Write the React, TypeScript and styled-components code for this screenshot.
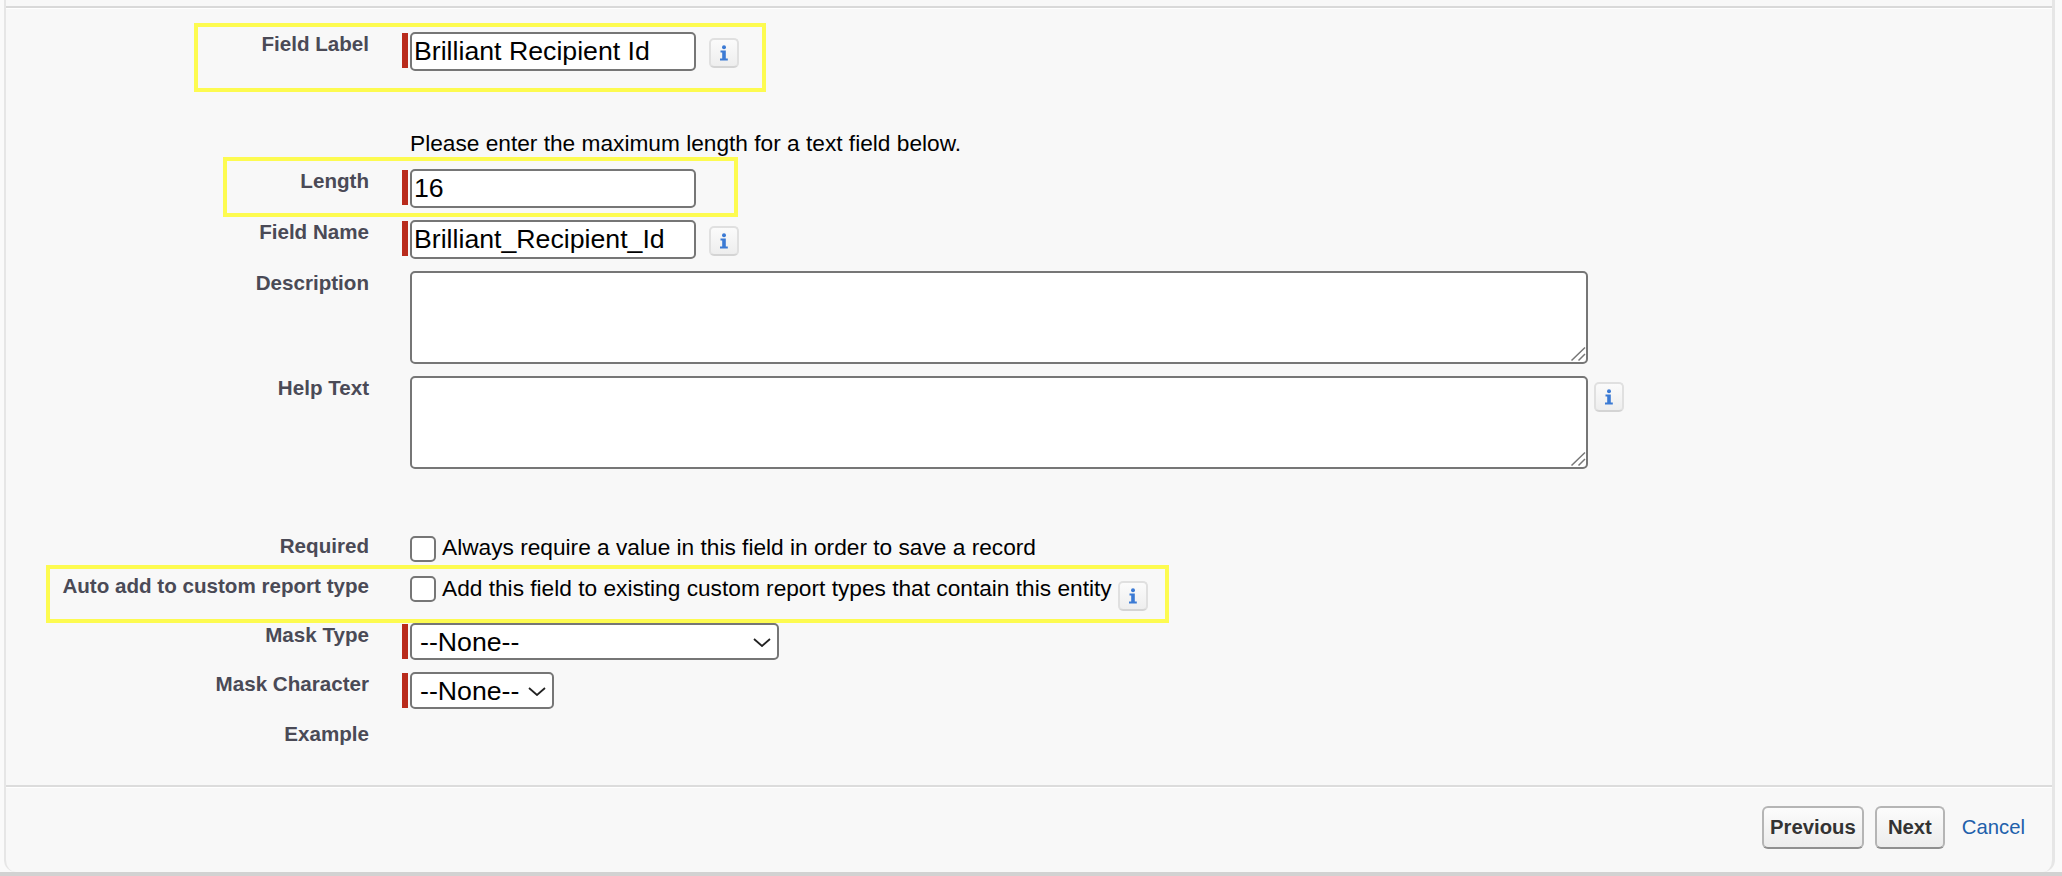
import React from "react";
import styled, { createGlobalStyle } from "styled-components";

const Global = createGlobalStyle`
  html, body { margin: 0; padding: 0; background: #fff; }
  body { font-family: "Liberation Sans", Arial, sans-serif; }
  * { box-sizing: border-box; }
`;

const Page = styled.div`
  position: relative;
  width: 2062px;
  height: 876px;
  overflow: hidden;
  background: #fafafa;
  padding: 0 7px 0 4px;
  border-bottom: 4px solid #d2d2d2;
`;

const Panel = styled.div`
  height: 872px;
  display: flex;
  flex-direction: column;
  background: #f8f8f8;
  border-left: 2px solid #e6e6e6;
  border-right: 3px solid #e6e6e6;
  border-bottom-left-radius: 12px;
  border-bottom-right-radius: 12px;
  padding-top: 6px;
`;

const Form = styled.div`
  flex: 1;
  border-top: 2px solid #d9d9d9;
  box-shadow: inset 0 1px 0 #fff;
  padding-top: 24px;
`;

const Row = styled.div<{ $mt?: number }>`
  display: grid;
  grid-template-columns: 363px 1fr;
  column-gap: 33px;
  margin-top: ${(p) => p.$mt ?? 0}px;
`;

const Label = styled.div<{ $up?: number }>`
  text-align: right;
  font-weight: 700;
  font-size: 20.6px;
  line-height: 24px;
  color: #4a4a56;
  margin-top: ${(p) => -(p.$up ?? 0)}px;
`;

const Field = styled.div`
  display: flex;
  align-items: flex-start;
  min-height: 24px;
`;

const ReqBar = styled.span<{ $on?: boolean }>`
  width: 6px;
  height: 35px;
  margin-top: 1px;
  margin-right: 2px;
  background: ${(p) => (p.$on ? "#b92b1c" : "transparent")};
  flex: none;
`;

const TextInput = styled.input`
  width: 286px;
  height: 39px;
  padding: 0 2px;
  font-family: "Liberation Sans", Arial, sans-serif;
  font-size: 26.7px;
  color: #000;
  background: #fff;
  border: 2px solid #767676;
  border-radius: 5px;
  outline: none;
`;

const AreaWrap = styled.span`
  position: relative;
  display: block;
  flex: none;
  width: 1178px;
  height: 93px;
  svg {
    position: absolute;
    right: 2px;
    bottom: 2px;
    pointer-events: none;
  }
`;

const Area = styled.textarea`
  display: block;
  width: 100%;
  height: 100%;
  resize: none;
  background: #fff;
  border: 2px solid #767676;
  border-radius: 5px;
  outline: none;
  margin: 0;
`;

const InfoButton = styled.span<{ $ml?: number; $mt?: number }>`
  display: flex;
  align-items: center;
  justify-content: center;
  width: 30px;
  height: 30px;
  flex: none;
  margin-left: ${(p) => p.$ml ?? 13}px;
  margin-top: ${(p) => p.$mt ?? 6}px;
  border: 2px solid #e0e0e0;
  border-bottom-color: #d4d4d4;
  border-radius: 5px;
  background: linear-gradient(#fbfbfb, #eeeeee);
`;

const Hint = styled.div`
  grid-column: 2;
  padding-left: 8px;
  font-size: 22.7px;
  line-height: 24px;
  color: #000;
`;

const Check = styled.span`
  width: 26px;
  height: 26px;
  flex: none;
  margin-left: 8px;
  background: #fff;
  border: 2px solid #767676;
  border-radius: 5px;
`;

const CheckText = styled.span<{ $up?: number }>`
  margin-left: 6px;
  margin-top: ${(p) => -(p.$up ?? 0)}px;
  font-size: 22.7px;
  line-height: 24px;
  color: #000;
`;

const SelectWrap = styled.span<{ $w: number; $h: number; $chev: number }>`
  position: relative;
  display: block;
  width: ${(p) => p.$w}px;
  height: ${(p) => p.$h}px;
  flex: none;
  svg {
    position: absolute;
    right: ${(p) => p.$chev}px;
    top: 15px;
    pointer-events: none;
  }
`;

const Select = styled.select`
  width: 100%;
  height: 100%;
  appearance: none;
  padding: 0 0 0 8px;
  font-family: "Liberation Sans", Arial, sans-serif;
  font-size: 26.7px;
  color: #000;
  background: #fff;
  border: 2px solid #767676;
  border-radius: 5px;
  outline: none;
`;

const Footer = styled.div`
  height: 87px;
  flex: none;
  display: flex;
  align-items: flex-start;
  justify-content: flex-end;
  border-top: 2px solid #dcdcdc;
  box-shadow: inset 0 1px 0 #fff;
  padding: 19px 27px 0 0;
`;

const Button = styled.button<{ $w: number }>`
  width: ${(p) => p.$w}px;
  height: 43px;
  margin-right: 11px;
  padding: 0;
  font-family: "Liberation Sans", Arial, sans-serif;
  font-weight: 700;
  font-size: 20.3px;
  color: #333;
  background: linear-gradient(#fcfcfc, #ececec);
  border: 2px solid #b5b5b5;
  border-bottom-color: #8f8f8f;
  border-radius: 6px;
`;

const CancelLink = styled.a`
  margin-left: 6px;
  font-size: 20.3px;
  line-height: 43px;
  color: #2160ab;
`;

const Highlight = styled.div<{ $x: number; $y: number; $w: number; $h: number }>`
  position: absolute;
  left: ${(p) => p.$x}px;
  top: ${(p) => p.$y}px;
  width: ${(p) => p.$w}px;
  height: ${(p) => p.$h}px;
  border: 4px solid #fdfb50;
  pointer-events: none;
`;

const InfoGlyph = () => (
  <svg width="10" height="16" viewBox="0 0 10 16" aria-hidden="true">
    <circle cx="5" cy="2.2" r="2" fill="#3b7ad4" />
    <path d="M1.500 5.600h5.300v7.900h2v2H1v-2h2.200V7.500H1.500z" fill="#3b7ad4" />
  </svg>
);

const Chevron = () => (
  <svg width="18" height="9" viewBox="0 0 18 9" aria-hidden="true">
    <path d="M1 1l8 7 8-7" fill="none" stroke="#222" strokeWidth="1.800" />
  </svg>
);

const Grip = () => (
  <svg width="16" height="16" viewBox="0 0 16 16" aria-hidden="true">
    <path d="M1.500 14.500L15 1.500M8.500 14.500L15 8" fill="none" stroke="#777" strokeWidth="1.500" />
  </svg>
);

export default function App() {
  return (
    <>
      <Global />
      <Page>
        <Panel>
          <Form>
            <Row>
              <Label>Field Label</Label>
              <Field>
                <ReqBar $on />
                <TextInput readOnly value="Brilliant Recipient Id" />
                <InfoButton><InfoGlyph /></InfoButton>
              </Field>
            </Row>
            <Row $mt={60}>
              <Hint>Please enter the maximum length for a text field below.</Hint>
            </Row>
            <Row $mt={14}>
              <Label>Length</Label>
              <Field>
                <ReqBar $on />
                <TextInput readOnly value="16" />
              </Field>
            </Row>
            <Row $mt={12}>
              <Label>Field Name</Label>
              <Field>
                <ReqBar $on />
                <TextInput readOnly value="Brilliant_Recipient_Id" />
                <InfoButton><InfoGlyph /></InfoButton>
              </Field>
            </Row>
            <Row $mt={12}>
              <Label>Description</Label>
              <Field>
                <ReqBar />
                <AreaWrap><Area /><Grip /></AreaWrap>
              </Field>
            </Row>
            <Row $mt={12}>
              <Label>Help Text</Label>
              <Field>
                <ReqBar />
                <AreaWrap><Area /><Grip /></AreaWrap>
                <InfoButton $ml={6}><InfoGlyph /></InfoButton>
              </Field>
            </Row>
            <Row $mt={67}>
              <Label $up={2}>Required</Label>
              <Field>
                <Check />
                <CheckText $up={1}>Always require a value in this field in order to save a record</CheckText>
              </Field>
            </Row>
            <Row $mt={14}>
              <Label $up={2}>Auto add to custom report type</Label>
              <Field>
                <Check />
                <CheckText>Add this field to existing custom report types that contain this entity</CheckText>
                <InfoButton $ml={6} $mt={5}><InfoGlyph /></InfoButton>
              </Field>
            </Row>
            <Row $mt={12}>
              <Label>Mask Type</Label>
              <Field>
                <ReqBar $on />
                <SelectWrap $w={369} $h={37} $chev={8}>
                  <Select><option>--None--</option></Select>
                  <Chevron />
                </SelectWrap>
              </Field>
            </Row>
            <Row $mt={12}>
              <Label>Mask Character</Label>
              <Field>
                <ReqBar $on />
                <SelectWrap $w={144} $h={37} $chev={8}>
                  <Select><option>--None--</option></Select>
                  <Chevron />
                </SelectWrap>
              </Field>
            </Row>
            <Row $mt={13}>
              <Label>Example</Label>
            </Row>
          </Form>
          <Footer>
            <Button $w={102}>Previous</Button>
            <Button $w={70}>Next</Button>
            <CancelLink>Cancel</CancelLink>
          </Footer>
        </Panel>
        <Highlight $x={194} $y={23} $w={572} $h={69} />
        <Highlight $x={223} $y={157} $w={515} $h={60} />
        <Highlight $x={46} $y={565} $w={1123} $h={58} />
      </Page>
    </>
  );
}
